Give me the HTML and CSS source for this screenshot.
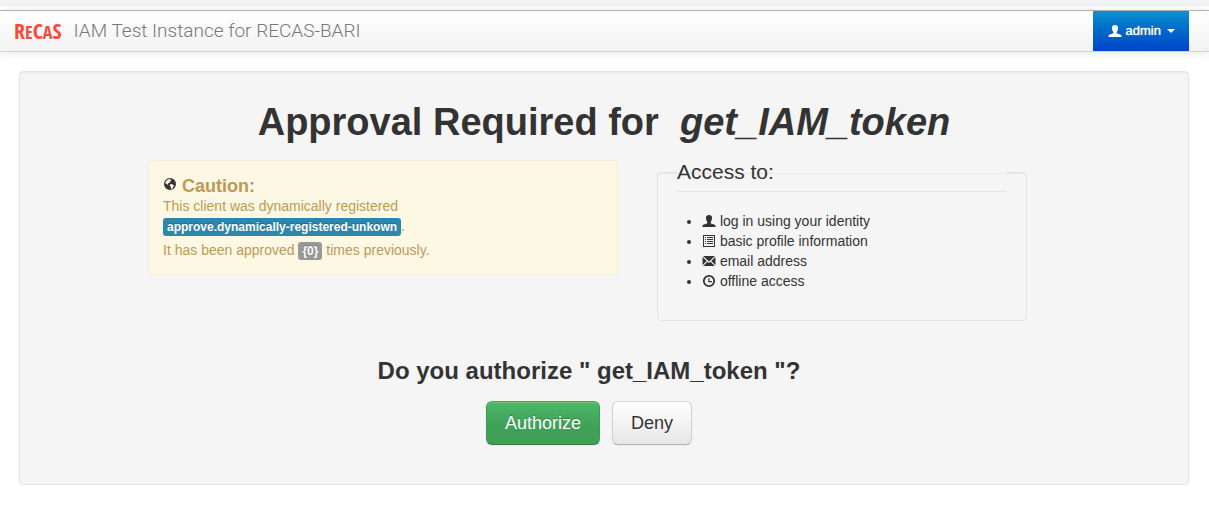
FILE: index.html
```html
<!DOCTYPE html>
<html lang="en">
<head>
<meta charset="utf-8">
<meta name="viewport" content="width=device-width, initial-scale=1">
<title>Approval Required</title>
<link rel="stylesheet" href="styles.css">
</head>
<body>
<svg class="sprite" aria-hidden="true">
  <symbol id="icon-user" viewBox="0 0 14 14"><path d="M4 4C4 1.700 5 1 7 1s3 .7 3 3c0 1.800-.6 3.100-1.300 3.900v1.300c1 .7 4.300 1 4.800 2.300V13H.5v-1.500C1 10.200 4.300 9.900 5.300 9.200V7.900C4.600 7.100 4 5.800 4 4z"/></symbol>
  <symbol id="icon-list" viewBox="0 0 14 14"><path fill-rule="evenodd" d="M1 1h12v12H1zM2 2v10h10V2zM3 3h1v1H3zM5 3h6v1H5zM3 5h1v1H3zM5 5h6v1H5zM3 7h1v1H3zM5 7h6v1H5zM3 9h1v1H3zM5 9h6v1H5z"/></symbol>
  <symbol id="icon-mail" viewBox="0 0 14 14"><path d="M1 2h12L7 7.500zM.5 3l4.300 4L.5 11zM13.500 3L9.200 7l4.300 4zM1 12l4.600-4.300L7 9l1.400-1.300L13 12z"/></symbol>
  <symbol id="icon-time" viewBox="0 0 14 14"><circle cx="7" cy="7" r="5.200" fill="none" stroke="currentColor" stroke-width="1.800"/><path d="M6.300 4h1.200v3H10v1.200H6.300z"/></symbol>
  <symbol id="icon-globe" viewBox="0 0 14 14"><path fill-rule="evenodd" d="M7 1a6 6 0 1 0 0 12A6 6 0 0 0 7 1zM6.200 2l1.700.3-.6 1 1.200.3-1.400 1.200-.5 1-1.700.3.6 1-.8.700L3.300 6.500l-1.100.3C2.300 4.600 3.800 2.500 6.200 2zM7.500 7l2.500.6 1 1.200-1 1.500-1 1.600-1 .1-.2-2.200-1.200-1.200z"/></symbol>
</svg>
<div class="top-strip"></div>
<header class="navbar">
  <a class="brand" href="#">
    <span class="logo">R<small>E</small>C<small>A</small>S</span>
    <span class="brand-title">IAM Test Instance for RECAS-BARI</span>
  </a>
  <button class="user-menu" type="button">
    <svg class="icon" aria-hidden="true"><use href="#icon-user"/></svg>
    <span>admin</span>
    <span class="caret"></span>
  </button>
</header>
<main class="well">
  <h1>Approval Required for &nbsp;<em>get_IAM_token</em></h1>
  <form class="approval">
    <div class="columns">
      <section class="alert">
        <h4><svg class="icon globe" aria-hidden="true"><use href="#icon-globe"/></svg> Caution:</h4>
        <p>This client was dynamically registered</p>
        <p class="tagged"><span class="label info">approve.dynamically-registered-unkown</span>.</p>
        <p class="count">It has been approved <span class="label">{0}</span> times previously.</p>
      </section>
      <fieldset class="access">
        <legend>Access to:</legend>
        <ul>
          <li><svg class="icon" aria-hidden="true"><use href="#icon-user"/></svg> log in using your identity</li>
          <li><svg class="icon" aria-hidden="true"><use href="#icon-list"/></svg> basic profile information</li>
          <li><svg class="icon" aria-hidden="true"><use href="#icon-mail"/></svg> email address</li>
          <li><svg class="icon" aria-hidden="true"><use href="#icon-time"/></svg> offline access</li>
        </ul>
      </fieldset>
    </div>
    <h3>Do you authorize " get_IAM_token "?</h3>
    <div class="actions">
      <button class="btn success" type="submit">Authorize</button>
      <button class="btn" type="button">Deny</button>
    </div>
  </form>
</main>
</body>
</html>
```
FILE: styles.css
```css
* { box-sizing: border-box; }
body {
  margin: 0;
  background: #fff;
  color: #333;
  font: 14px/20px "Helvetica Neue", Helvetica, "Liberation Sans", Arial, sans-serif;
}
h1, h3, h4, p, ul { margin: 0; }
.sprite { display: none; }
.icon {
  width: 14px;
  height: 14px;
  fill: currentColor;
  vertical-align: -2px;
}
.top-strip {
  height: 10px;
  background: linear-gradient(#f1f3f4 6px, #fff 6px);
}

.navbar {
  display: flex;
  justify-content: space-between;
  padding: 0 20px 0 14px;
  background: linear-gradient(#fff, #f2f2f2);
  border-top: 1px solid #b0b0b0;
  border-bottom: 1px solid #d4d4d4;
  box-shadow: 0 1px 10px rgba(0, 0, 0, .1);
}
.brand {
  display: flex;
  align-items: center;
  gap: 12px;
  color: #777;
  text-decoration: none;
  text-shadow: 0 1px 0 #fff;
}
.logo {
  display: flex;
  align-items: baseline;
  color: #f9493b;
  font: bold 22px/32px "Open Sans Condensed", "Liberation Sans Narrow", "DejaVu Sans Condensed", sans-serif;
}
.logo small { font-size: 18px; }
.brand-title { font: 300 19px/40px Roboto, "Liberation Sans", sans-serif; }
.user-menu {
  display: flex;
  align-items: center;
  gap: 4px;
  height: 40px;
  padding: 0 14px 0 15px;
  border: 0;
  background: linear-gradient(#1090d0, #0070c8 40%, #0044cc);
  color: #fff;
  font: 13px/20px "Liberation Sans", Arial, sans-serif;
  text-shadow: 0 0 1px #fff;
}
.caret {
  margin-left: 2px;
  border: 4px solid transparent;
  border-top-color: #fff;
  border-bottom: 0;
}

.well {
  margin: 19px 20px 20px 19px;
  padding: 30px 19px 39px;
  background: #f5f5f5;
  border: 1px solid #e3e3e3;
  border-radius: 4px;
  box-shadow: inset 0 1px 1px rgba(0, 0, 0, .05);
}
h1 {
  font-size: 38px;
  line-height: 40px;
  text-align: center;
}
.approval { margin-left: -30px; }
.columns {
  display: flex;
  align-items: flex-start;
  justify-content: center;
  gap: 39px;
  margin-top: 10px;
  padding-right: 3px;
}
.alert {
  flex: 0 1 470px;
  margin-top: 8px;
  padding: 15px 35px 14px 14px;
  background: #fcf8e3;
  border: 1px solid #fbeed5;
  border-radius: 4px;
  color: #c09853;
  text-shadow: 0 1px 0 rgba(255, 255, 255, .5);
}
h4 {
  font-size: 18px;
  line-height: 20px;
}
.globe {
  color: #333;
  vertical-align: 1px;
}
.count { margin-top: 4px; }
.label {
  display: inline-block;
  padding: 2px 4px;
  border-radius: 3px;
  background: #999;
  color: #fff;
  font-size: 12px;
  font-weight: bold;
  line-height: 14px;
  text-shadow: 0 -1px 0 rgba(0, 0, 0, .25);
}
.info { background: #2d87ad; }

.access {
  flex: 0 1 370px;
  min-width: 0;
  margin: 0;
  padding: 19px;
  border: 1px solid #e3e3e3;
  border-radius: 4px;
  background: #f5f5f5;
  box-shadow: inset 0 1px 1px rgba(0, 0, 0, .05);
}
legend {
  width: 100%;
  padding: 0;
  border-bottom: 1px solid #e5e5e5;
  font-size: 21px;
  line-height: 39px;
}
.access ul {
  padding-left: 25px;
  margin-bottom: 10px;
}

h3 {
  margin-top: 30px;
  font-size: 24px;
  line-height: 40px;
  text-align: center;
}
.actions {
  display: flex;
  justify-content: center;
  gap: 12px;
  margin-top: 10px;
}
.btn {
  padding: 11px 18px;
  border: 1px solid #ccc;
  border-color: #d9d9d9 #d0d0d0 #b3b3b3;
  border-radius: 6px;
  background: linear-gradient(#fff, #e6e6e6);
  box-shadow: inset 0 1px 0 rgba(255, 255, 255, .2), 0 1px 2px rgba(0, 0, 0, .05);
  color: #333;
  font: 18px/20px "Liberation Sans", Arial, sans-serif;
  text-shadow: 0 1px 1px rgba(255, 255, 255, .75);
}
.success {
  border-color: #43a25a #3d9a54 #2f7d42;
  background: linear-gradient(#4ab866, #3fa058 60%);
  color: #fff;
  text-shadow: 0 -1px 0 rgba(0, 0, 0, .25);
}
```
